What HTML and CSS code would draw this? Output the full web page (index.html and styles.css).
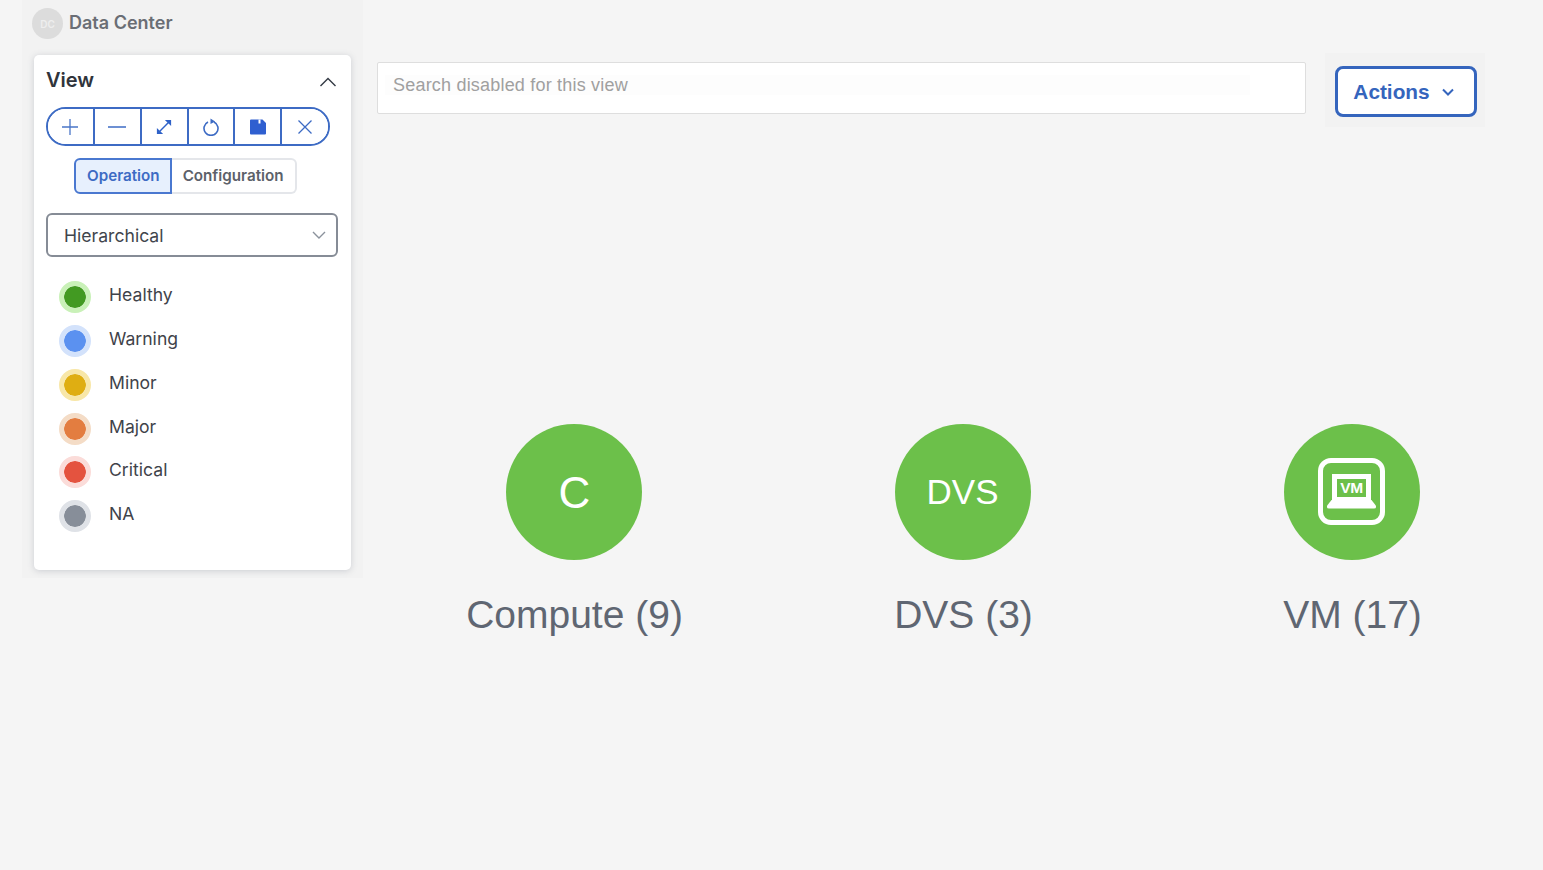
FILE: index.html
```html
<!DOCTYPE html>
<html lang="en">
  <head>
    <meta charset="UTF-8" />
    <title>Data Center Topology</title>
    <link rel="stylesheet" href="styles.css">
  </head>
  <body>
    <div class="page">
      <aside class="sidebar">
        <div class="crumb">
          <span class="crumbBadge">DC</span>
          <span class="crumbName">Data Center</span>
        </div>
        <div class="viewPanel">
          <div class="viewHead">
            <h3>View</h3>
            <svg class="collapseIcon" width="18" height="10" viewBox="0 0 18 10"><path d="M1.5 9 9 1.5 16.5 9" fill="none" stroke="#333a44" stroke-width="1.4"/></svg>
          </div>
          <div class="toolGroup">
            <button class="toolButton">
              <svg width="18" height="18" viewBox="0 0 18 18"><path d="M9 1v16M1 9h16" fill="none" stroke="#4a76c8" stroke-width="1.3"/></svg>
            </button>
            <button class="toolButton">
              <svg width="18" height="18" viewBox="0 0 18 18"><path d="M0 9h18" fill="none" stroke="#3d6bc4" stroke-width="1.6"/></svg>
            </button>
            <button class="toolButton">
              <svg width="16" height="16" viewBox="0 0 18 18"><path d="M4 14 14 4" fill="none" stroke="#2f62c8" stroke-width="1.6"/><path d="M10 1h7v7zM1 10v7h7z" fill="#2f62c8"/></svg>
            </button>
            <button class="toolButton">
              <svg width="18" height="18" viewBox="0 0 18 18"><path d="M6 4a7 7 0 1 0 6 0" fill="none" stroke="#3d6bc4" stroke-width="1.6"/><path d="M8.5 .6 13.2 3.400 8.5 6z" fill="#3d6bc4"/></svg>
            </button>
            <button class="toolButton">
              <svg width="18" height="18" viewBox="0 0 18 18"><path d="M1 2.500A1 1 0 0 1 2 1.500h11.500L17 5v10.500a1 1 0 0 1-1 1H2a1 1 0 0 1-1-1z" fill="#2f5fd0"/><path d="M9.500 1.500h2v4h-2z" fill="#fff"/></svg>
            </button>
            <button class="toolButton">
              <svg width="18" height="18" viewBox="0 0 18 18"><path d="M2.500 2.500l13 13M15.500 2.500l-13 13" fill="none" stroke="#3d6bc4" stroke-width="1.3"/></svg>
            </button>
          </div>
          <div class="modeRow">
            <button class="modeButton modeActive">Operation</button>
            <button class="modeButton">Configuration</button>
          </div>
          <div class="selectBox">
            <span>Hierarchical</span>
            <svg width="14" height="8" viewBox="0 0 14 8"><path d="M1 1l6 6 6-6" fill="none" stroke="#8b929c" stroke-width="1.4"/></svg>
          </div>
          <ul class="legend">
            <li><span class="dot dotHealthy"></span><span class="legendText">Healthy</span></li>
            <li><span class="dot dotWarning"></span><span class="legendText">Warning</span></li>
            <li><span class="dot dotMinor"></span><span class="legendText">Minor</span></li>
            <li><span class="dot dotMajor"></span><span class="legendText">Major</span></li>
            <li><span class="dot dotCritical"></span><span class="legendText">Critical</span></li>
            <li><span class="dot dotNa"></span><span class="legendText">NA</span></li>
          </ul>
        </div>
      </aside>

      <main class="content">
        <div class="topRow">
          <div class="searchBox">
            <div class="searchField">Search disabled for this view</div>
          </div>
          <div class="actionsWrap">
            <button class="actionsButton">
              Actions
              <svg width="12" height="8" viewBox="0 0 12 8"><path d="M1 1.500l5 5 5-5" fill="none" stroke="#3565bd" stroke-width="2"/></svg>
            </button>
          </div>
        </div>
        <div class="nodeRow">
          <div class="node">
            <div class="nodeCircle nodeCircleBig">C</div>
            <div class="nodeLabel">Compute (9)</div>
          </div>
          <div class="node">
            <div class="nodeCircle">DVS</div>
            <div class="nodeLabel">DVS (3)</div>
          </div>
          <div class="node">
            <div class="nodeCircle">
              <div class="vmIcon">
                <div class="vmScreen">VM</div>
                <div class="vmBase"></div>
              </div>
            </div>
            <div class="nodeLabel">VM (17)</div>
          </div>
        </div>
      </main>
    </div>
  </body>
</html>
```

FILE: styles.css
```css
* {
  box-sizing: border-box;
}

html,
body {
  height: 100%;
}

body {
  margin: 0;
  background-color: #f5f5f5;
  font-family: 'Inter', 'Liberation Sans', sans-serif;
  color: #3a3f47;
}

.page {
  display: flex;
  align-items: flex-start;
  padding-left: 22px;
}

.sidebar {
  width: 341px;
  height: 578px;
  padding: 8px 12px 8px 10px;
  background-color: #f2f2f2;
  flex-shrink: 0;
}

.crumb {
  display: flex;
  align-items: center;
  gap: 6px;
  height: 31px;
}

.crumbBadge {
  width: 31px;
  height: 31px;
  border-radius: 50%;
  background-color: #dcdcdc;
  color: #eeeeee;
  font-size: 10px;
  font-weight: 600;
  display: flex;
  align-items: center;
  justify-content: center;
}

.crumbName {
  margin-bottom: 2px;
  font-size: 18px;
  font-weight: 600;
  color: #6a6e75;
}

.viewPanel {
  margin-top: 16px;
  margin-left: 2px;
  width: 317px;
  height: 515px;
  padding: 12px 13px 12px 12px;
  background-color: #fff;
  border-radius: 5px;
  box-shadow: 0 1px 6px rgba(90, 100, 120, 0.25);
}

.viewHead {
  display: flex;
  align-items: center;
  justify-content: space-between;
  height: 26px;
  padding-right: 1px;
}

.viewHead h3 {
  margin: 0;
  font-size: 20px;
  font-weight: 600;
  color: #30343b;
}

.collapseIcon {
  margin-top: 4px;
}

.toolGroup {
  display: flex;
  width: 284px;
  height: 39px;
  margin-top: 14px;
  border: 2.5px solid #3d6bc4;
  border-radius: 20px;
  overflow: hidden;
}

.toolButton {
  flex: 1;
  padding: 0;
  border: none;
  border-right: 2.5px solid #3d6bc4;
  background: #fff;
  display: flex;
  align-items: center;
  justify-content: center;
}

.toolButton:last-child {
  flex: 1.020;
  border-right: none;
}

.modeRow {
  display: flex;
  justify-content: flex-start;
  margin-top: 12px;
  padding-left: 28px;
}

.modeButton {
  height: 36px;
  padding: 0 11px 2px;
  font-family: inherit;
  font-size: 15.200px;
  font-weight: 600;
  color: #5c6169;
  background: #fff;
  border: 2.5px solid #e4e6ea;
  border-left: none;
  border-radius: 0 6px 6px 0;
}

.modeActive {
  padding-right: 10px;
  color: #3d6bc4;
  background-color: #e7f0fd;
  border: 2.5px solid #4a78d0;
  border-radius: 6px 0 0 6px;
}

.selectBox {
  display: flex;
  align-items: center;
  justify-content: space-between;
  height: 44px;
  margin-top: 19px;
  padding: 0 10px 0 16px;
  border: 2.5px solid #868c96;
  border-radius: 6px;
  font-size: 17.600px;
  color: #41454c;
}

.legend {
  list-style: none;
  margin: 24px 0 0;
  padding: 0 0 0 13px;
}

.legend li {
  display: flex;
  align-items: flex-start;
  gap: 18.500px;
  height: 43.850px;
  font-size: 17.600px;
  line-height: 22px;
  color: #3f434a;
}

.legendText {
  margin-top: 3px;
}

.dot {
  width: 31.500px;
  height: 32px;
  border-radius: 50%;
  border: 5.5px solid;
  background-clip: padding-box;
}

.dotHealthy {
  background-color: #429a22;
  border-color: #c9f1b8;
}

.dotWarning {
  background-color: #5b91f0;
  border-color: #d3e2fb;
}

.dotMinor {
  background-color: #dfae12;
  border-color: #f8e7a8;
}

.dotMajor {
  background-color: #e37d40;
  border-color: #f4dcc6;
}

.dotCritical {
  background-color: #e4533f;
  border-color: #fbdcd9;
}

.dotNa {
  background-color: #878e99;
  border-color: #dfe2e7;
}

.content {
  flex: 1;
  padding-left: 14px;
}

.topRow {
  display: flex;
  align-items: flex-start;
  margin-top: 53px;
}

.searchBox {
  width: 929px;
  height: 52px;
  margin-top: 9px;
  padding: 0 0 6px 7px;
  display: flex;
  align-items: center;
  background-color: #fff;
  border: 1px solid #dedede;
  border-radius: 2px;
}

.searchField {
  width: 865px;
  height: 20px;
  padding-left: 8px;
  background-color: #fdfdfd;
  font-family: 'Liberation Sans', sans-serif;
  font-size: 18px;
  letter-spacing: 0.2px;
  line-height: 20px;
  color: #a0a0a0;
}

.actionsWrap {
  width: 160px;
  height: 74px;
  margin-left: 19px;
  padding: 13px 8px 0 10px;
  background-color: #f2f2f2;
}

.actionsButton {
  width: 142px;
  height: 51px;
  padding: 0 5px 0 0;
  display: flex;
  align-items: center;
  justify-content: center;
  gap: 12px;
  background-color: #fff;
  border: 3px solid #3565bd;
  border-radius: 8px;
  font-family: 'Liberation Sans', sans-serif;
  font-size: 20.800px;
  font-weight: 700;
  color: #3565bd;
}

.nodeRow {
  display: grid;
  grid-template-columns: repeat(3, 389px);
  margin-top: 297px;
  margin-left: 2px;
}

.node {
  display: flex;
  flex-direction: column;
  align-items: center;
}

.nodeCircle {
  width: 136px;
  height: 136px;
  border-radius: 50%;
  background-color: #6cc04a;
  color: #fff;
  font-family: 'Liberation Sans', sans-serif;
  font-size: 35px;
  display: flex;
  align-items: center;
  justify-content: center;
}

.nodeCircleBig {
  padding-top: 1px;
  padding-left: 2px;
  font-size: 44px;
}

.nodeLabel {
  margin-top: 32px;
  padding-left: 2px;
  font-family: 'Liberation Sans', sans-serif;
  font-size: 39px;
  line-height: 46px;
  color: #5f6672;
}

.vmIcon {
  width: 67px;
  height: 67px;
  margin-bottom: 2px;
  padding-top: 11px;
  border: 5px solid #fff;
  border-radius: 13px;
  display: flex;
  flex-direction: column;
  align-items: center;
}

.vmScreen {
  width: 39px;
  height: 26px;
  border: 5px solid #fff;
  border-width: 5px 5px 3px;
  font-size: 15.500px;
  font-weight: 700;
  line-height: 18px;
  text-align: center;
  letter-spacing: -0.4px;
}

.vmBase {
  width: 49px;
  height: 9px;
  background-color: #fff;
  clip-path: polygon(10% 0, 90% 0, 100% 70%, 100% 100%, 0 100%, 0 70%);
  border-radius: 0 0 2px 2px;
}
```
